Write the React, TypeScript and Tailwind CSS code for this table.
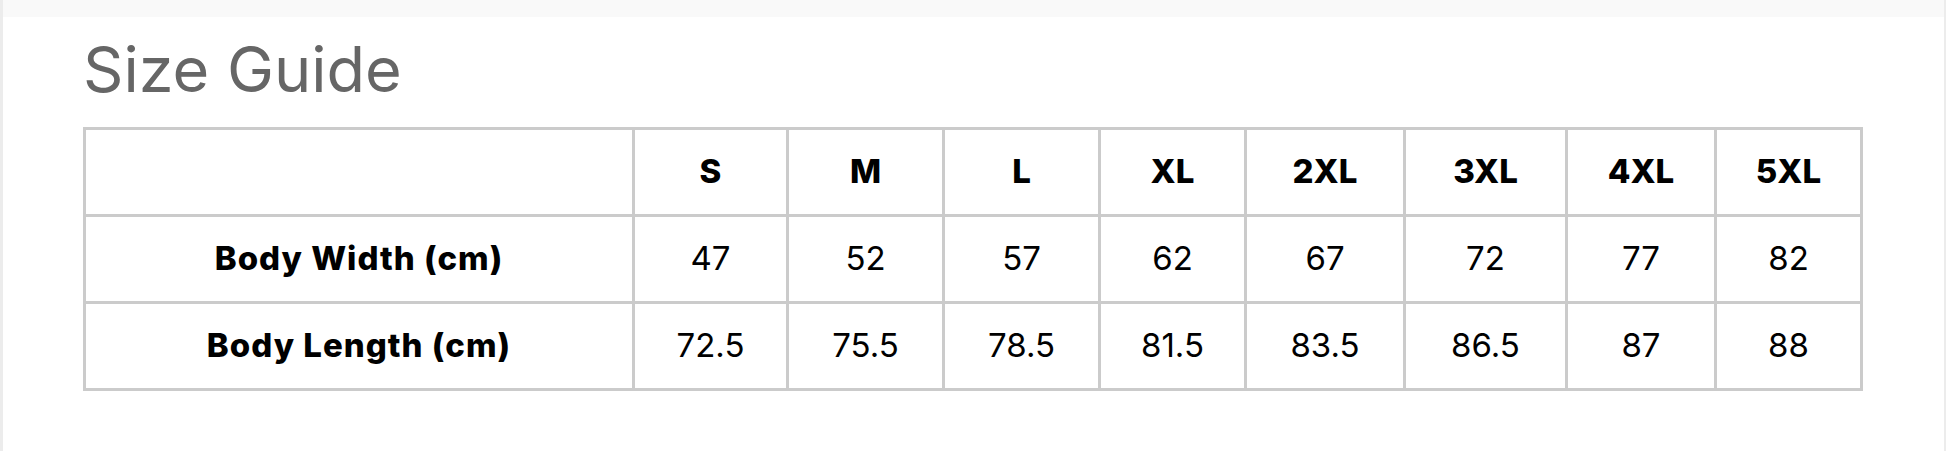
import React from "react";

const sizes = ["S", "M", "L", "XL", "2XL", "3XL", "4XL", "5XL"];

const rows = [
  { label: "Body Width (cm)", values: ["47", "52", "57", "62", "67", "72", "77", "82"] },
  { label: "Body Length (cm)", values: ["72.5", "75.5", "78.5", "81.5", "83.5", "86.5", "87", "88"] },
];

const colWidths = ["w-[549px]", "w-[154px]", "w-[156px]", "w-[156px]", "w-[146px]", "w-[159px]", "w-[162px]", "w-[149px]", "w-[146px]"];

export default function App() {
  return (
    <div className="h-[451px] w-full bg-white border-l-[3px] border-r-[2px] border-[#ececec] font-['Inter',sans-serif] text-black">
      <div className="h-[17px] bg-[#f9f9f9]" />
      <div className="pl-[80px]">
        <h2 className="text-[63px] leading-[76px] mt-[14px] font-normal text-[#666666]">Size Guide</h2>
        <SizeTable />
      </div>
    </div>
  );
}

function SizeTable() {
  return (
    <table className="mt-[20px] w-[1777px] table-fixed border-collapse border-[3px] border-[#cbcbcb]">
      <colgroup>
        {colWidths.map((w, i) => (
          <col key={i} className={w} />
        ))}
      </colgroup>
      <thead>
        <tr className="h-[87px]">
          <th className="border-[3px] border-[#cbcbcb]" />
          {sizes.map((s) => (
            <th key={s} className="border-[3px] border-[#cbcbcb] text-[33px] font-extrabold text-center">
              {s}
            </th>
          ))}
        </tr>
      </thead>
      <tbody>
        {rows.map((row) => (
          <tr key={row.label} className="h-[87px]">
            <td className="border-[3px] border-[#cbcbcb] text-[33px] font-extrabold text-center tracking-[1px]">{row.label}</td>
            {row.values.map((v, i) => (
              <td key={i} className="border-[3px] border-[#cbcbcb] text-[33px] font-normal text-center">
                {v}
              </td>
            ))}
          </tr>
        ))}
      </tbody>
    </table>
  );
}
